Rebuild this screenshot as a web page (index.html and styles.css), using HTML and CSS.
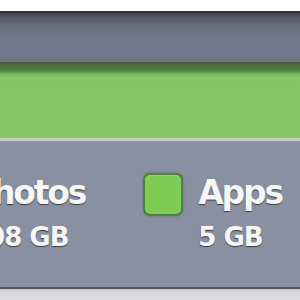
FILE: index.html
```html
<!DOCTYPE html>
<html>
<head>
<meta charset="utf-8">
<link rel="stylesheet" href="styles.css">
</head>
<body>
<div class="page">
  <div class="gap"></div>
  <div class="capacity">
    <div class="track"></div>
    <div class="fill"></div>
  </div>
  <div class="legend">
    <div class="item item-photos">
      <div class="swatch"></div>
      <div class="label">
        <div class="name">Photos</div>
        <div class="size">108 GB</div>
      </div>
    </div>
    <div class="item">
      <div class="swatch"></div>
      <div class="label">
        <div class="name">Apps</div>
        <div class="size">5 GB</div>
      </div>
    </div>
  </div>
  <div class="footer"></div>
</div>
</body>
</html>
```

FILE: styles.css
```css
html, body {
  margin: 0;
  padding: 0;
  background: #ffffff;
}
.page {
  width: 300px;
  height: 300px;
  overflow: hidden;
  display: flex;
  flex-direction: column;
  font-family: "DejaVu Sans", Verdana, sans-serif;
  font-weight: bold;
}
.gap {
  height: 11px;
  flex: none;
}
.capacity {
  flex: none;
  border-top: 2px solid #2f323a;
}
.track {
  height: 49px;
  background: linear-gradient(#3e424b 0, #555b68 5px, #677081 14px, #717a8a 24px, #727b8b 40px, #6c7484 49px);
}
.fill {
  height: 76px;
  background: linear-gradient(#4e5a48 0, #4a6e3c 3px, #4a7a3a 7px, #5a9448 10px, #78b85c 12px, #86c666 15px, #88c868 100%);
  border-bottom: 3px solid #c5cec6;
}
.legend {
  flex: none;
  height: 146px;
  background: #8990a1;
  display: flex;
  align-items: flex-start;
  gap: 58px;
  padding-top: 32px;
  margin-left: -85px;
  box-sizing: border-box;
}
.item {
  display: flex;
  align-items: flex-start;
  gap: 15px;
  flex: none;
}
.swatch {
  width: 36px;
  height: 39px;
  background: #80cc56;
  border: 2px solid #4f8240;
  border-radius: 7px;
  box-shadow: 0 0 2px rgba(40, 60, 30, 0.45), inset 0 1px 1px rgba(255,255,255,0.15);
  flex: none;
}
.label {
  display: flex;
  flex-direction: column;
  color: #f6f6f6;
  text-shadow: 0 1px 1px rgba(30, 32, 40, 0.75);
  margin-top: 2px;
}
.name {
  font-size: 33px;
  line-height: 35px;
  letter-spacing: -2.2px;
}
.size {
  font-size: 26px;
  line-height: 28px;
  letter-spacing: -1px;
  margin-top: 13px;
}
.footer {
  flex: 1;
  border-top: 2px solid #55585f;
  background: linear-gradient(#c8c8cc, #d8d8dc 3px, #dcdce0);
}
```
